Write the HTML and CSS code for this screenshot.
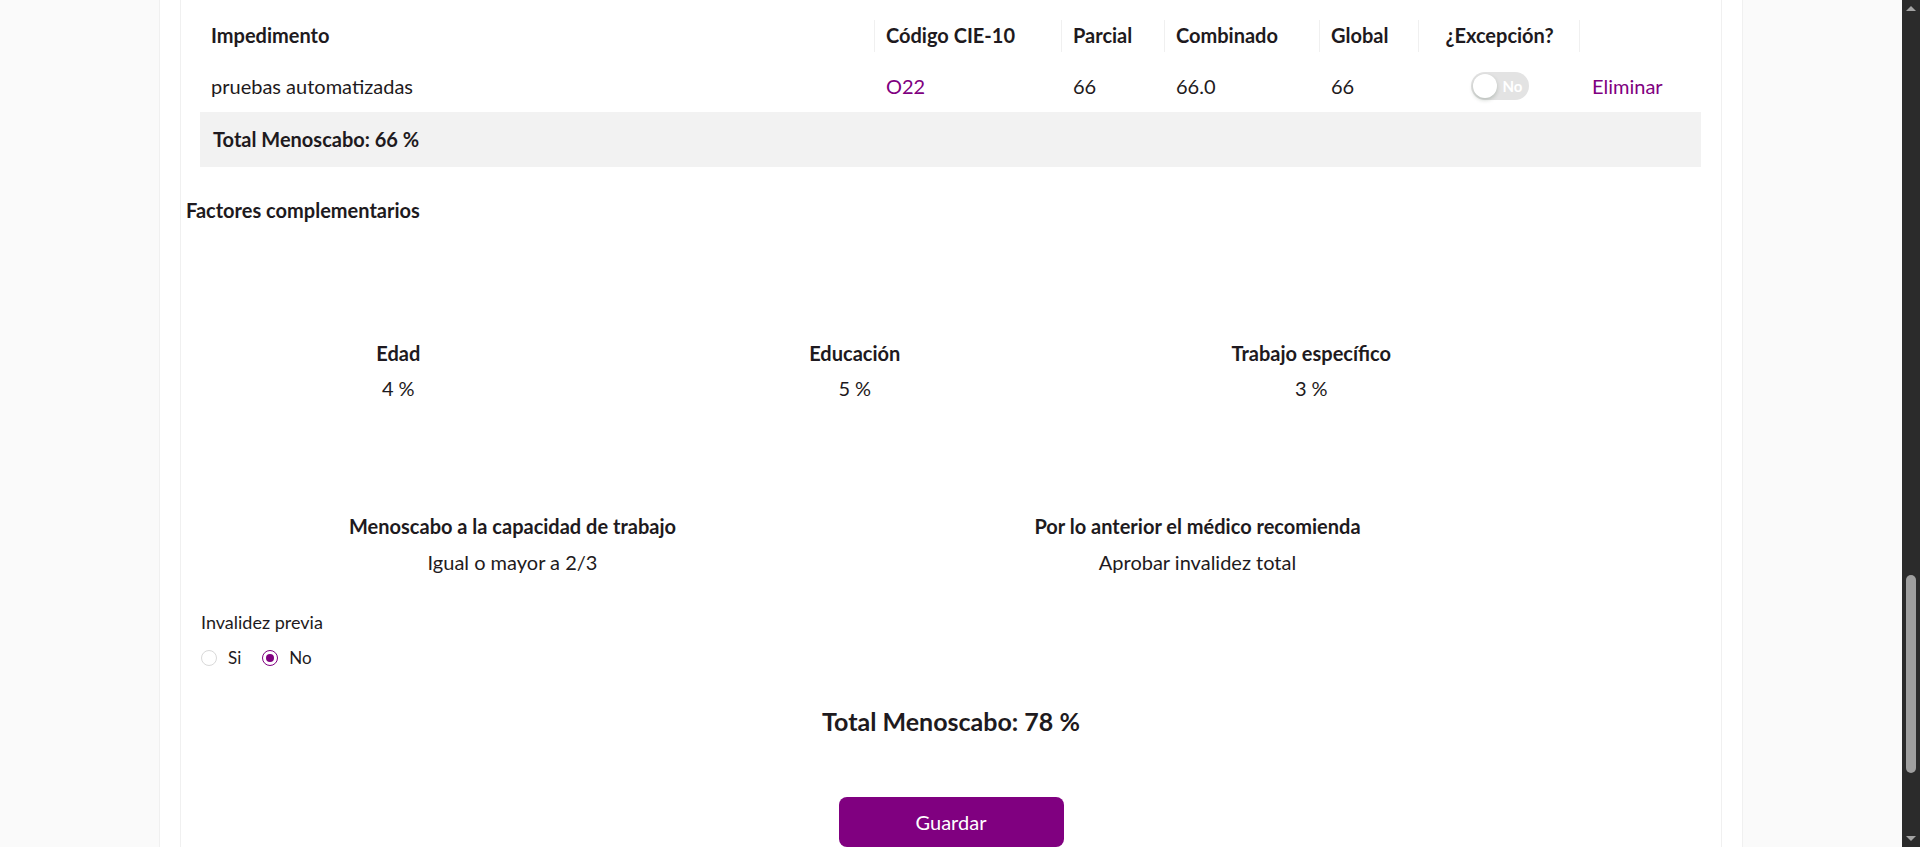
FILE: index.html
```html
<!DOCTYPE html>
<html lang="es">
<head>
<meta charset="utf-8">
<title>Menoscabo</title>
<link rel="stylesheet" href="styles.css">
</head>
<body>
<div class="screen">
  <div class="viewport">
    <div class="page">
      <div class="card">
        <div class="table-wrap">
          <table class="imp-table">
            <colgroup>
              <col class="c-imp"><col class="c-cie"><col class="c-par"><col class="c-comb"><col class="c-glob"><col class="c-exc"><col class="c-act">
            </colgroup>
            <thead>
              <tr>
                <th>Impedimento</th>
                <th>Código CIE-10</th>
                <th>Parcial</th>
                <th>Combinado</th>
                <th>Global</th>
                <th class="center">¿Excepción?</th>
                <th></th>
              </tr>
            </thead>
            <tbody>
              <tr>
                <td>pruebas automatizadas</td>
                <td><a class="link">O22</a></td>
                <td>66</td>
                <td>66.0</td>
                <td>66</td>
                <td class="center"><span class="switch"><span class="knob"></span><span class="switch-text">No</span></span></td>
                <td><a class="link">Eliminar</a></td>
              </tr>
            </tbody>
          </table>
          <div class="subtotal">Total Menoscabo: 66 %</div>
        </div>

        <h3 class="section-title">Factores complementarios</h3>

        <div class="factors">
          <div class="stat">
            <div class="stat-label">Edad</div>
            <div class="stat-value">4 %</div>
          </div>
          <div class="stat">
            <div class="stat-label">Educación</div>
            <div class="stat-value">5 %</div>
          </div>
          <div class="stat">
            <div class="stat-label">Trabajo específico</div>
            <div class="stat-value">3 %</div>
          </div>
        </div>

        <div class="summary">
          <div class="stat">
            <div class="stat-label">Menoscabo a la capacidad de trabajo</div>
            <div class="stat-value">Igual o mayor a 2/3</div>
          </div>
          <div class="stat">
            <div class="stat-label">Por lo anterior el médico recomienda</div>
            <div class="stat-value">Aprobar invalidez total</div>
          </div>
        </div>

        <div class="field">
          <div class="field-label">Invalidez previa</div>
          <div class="radio-group">
            <label class="radio"><span class="radio-dot"></span><span class="radio-text">Si</span></label>
            <label class="radio checked"><span class="radio-dot"></span><span class="radio-text">No</span></label>
          </div>
        </div>

        <div class="grand-total">Total Menoscabo: 78 %</div>

        <div class="actions">
          <button class="btn-primary" type="button">Guardar</button>
        </div>
      </div>
    </div>
  </div>
  <div class="scrollbar">
    <span class="sb-arrow sb-up"></span>
    <span class="sb-thumb"></span>
    <span class="sb-arrow sb-down"></span>
  </div>
</div>
</body>
</html>
```

FILE: styles.css
```css
html, body {
  margin: 0;
  padding: 0;
  height: 100%;
}

body {
  font-family: Lato, "Noto Sans", "Liberation Sans", sans-serif;
  color: #1e1a20;
  background: #fafafa;
}

.screen {
  display: flex;
  height: 847px;
  overflow: hidden;
}

.viewport {
  flex: 1;
  min-width: 0;
  overflow: hidden;
  background: #fafafa;
}

.page {
  box-sizing: border-box;
  width: 1584px;
  margin: 0 auto;
  min-height: 100%;
  padding: 0 20px;
  background: #ffffff;
  border-left: 1px solid #f0f0f0;
  border-right: 1px solid #f0f0f0;
}

.card {
  border-left: 1px solid #f0f0f0;
  border-right: 1px solid #f0f0f0;
  padding-top: 10px;
  padding-bottom: 60px;
  background: #ffffff;
}

/* ---------- table ---------- */
.table-wrap {
  margin: 0 20px 0 19px;
}

.imp-table {
  width: 100%;
  border-collapse: collapse;
  table-layout: fixed;
  font-size: 20px;
  line-height: 24px;
}

.c-imp { width: 675px; }
.c-cie { width: 187px; }
.c-par { width: 103px; }
.c-comb { width: 155px; }
.c-glob { width: 99px; }
.c-exc { width: 161px; }
.c-act { width: 121px; }

.imp-table th {
  position: relative;
  text-align: left;
  font-weight: 700;
  padding: 13px 11px 15px;
}

.imp-table th:not(:last-child)::before {
  content: "";
  position: absolute;
  right: 0;
  top: 50%;
  width: 1px;
  height: 32px;
  transform: translateY(-50%);
  background: rgba(0, 0, 0, 0.06);
}

.imp-table td {
  padding: 10px 11px 12px;
  font-weight: 400;
  vertical-align: middle;
}

.imp-table .center {
  text-align: center;
}

.link {
  color: #800080;
  text-decoration: none;
  cursor: pointer;
}

.imp-table td:last-child {
  padding-left: 12px;
}

.switch {
  display: inline-flex;
  align-items: center;
  box-sizing: border-box;
  width: 58px;
  height: 28px;
  padding: 2px;
  border-radius: 14px;
  background: #e3e3e3;
  vertical-align: top;
}

.knob {
  width: 24px;
  height: 24px;
  border-radius: 50%;
  background: #ffffff;
  box-shadow: 0 2px 4px rgba(0, 35, 11, 0.2);
}

.switch-text {
  margin-left: 6px;
  color: #ffffff;
  font-size: 15px;
  font-weight: 700;
  line-height: 20px;
}

.subtotal {
  background: #f2f2f2;
  padding: 15px 13px 16px;
  font-size: 20px;
  line-height: 24px;
  font-weight: 700;
}

/* ---------- factors ---------- */
.section-title {
  margin: 31px 0 0;
  padding-left: 5px;
  font-size: 20px;
  line-height: 24px;
  font-weight: 700;
}

.factors {
  display: grid;
  grid-template-columns: repeat(3, 456.5px);
  margin: 119px 0 0 -11px;
}

.summary {
  display: grid;
  grid-template-columns: repeat(2, 685px);
  margin: 114px 0 0 -11px;
}

.stat {
  text-align: center;
  font-size: 20px;
  line-height: 24px;
}

.stat-label {
  font-weight: 700;
}

.stat-value {
  margin-top: 11px;
}

.summary .stat-value {
  margin-top: 12px;
}

/* ---------- radio field ---------- */
.field {
  margin-top: 38px;
  padding-left: 20px;
  font-size: 17px;
}

.field-label {
  font-size: 18px;
  line-height: 20px;
}

.radio-group {
  display: flex;
  align-items: center;
  gap: 21px;
  margin-top: 14px;
  height: 24px;
}

.radio {
  display: inline-flex;
  align-items: center;
  cursor: pointer;
}

.radio-dot {
  box-sizing: border-box;
  width: 16px;
  height: 16px;
  border: 1px solid #d9d9d9;
  border-radius: 50%;
  background: #ffffff;
  display: inline-flex;
  align-items: center;
  justify-content: center;
}

.radio.checked .radio-dot {
  border-color: #800080;
}

.radio.checked .radio-dot::after {
  content: "";
  width: 8px;
  height: 8px;
  border-radius: 50%;
  background: #800080;
}

.radio-text {
  margin-left: 11px;
  line-height: 24px;
}

/* ---------- totals & actions ---------- */
.grand-total {
  margin-top: 36px;
  text-align: center;
  font-size: 25px;
  line-height: 30px;
  font-weight: 700;
}

.actions {
  margin-top: 61px;
  display: flex;
  justify-content: center;
}

.btn-primary {
  width: 225px;
  height: 50px;
  border: none;
  border-radius: 8px;
  background: #800080;
  color: #ffffff;
  font-family: Lato, "Noto Sans", "Liberation Sans", sans-serif;
  font-size: 20px;
  cursor: pointer;
}

/* ---------- fake scrollbar ---------- */
.scrollbar {
  width: 18px;
  flex: none;
  background: #2b2b2b;
  display: flex;
  flex-direction: column;
  align-items: center;
}

.sb-arrow {
  width: 0;
  height: 0;
  border-left: 5px solid transparent;
  border-right: 5px solid transparent;
}

.sb-up {
  margin-top: 6px;
  border-bottom: 5px solid #a3a3a3;
}

.sb-thumb {
  margin-top: 564px;
  width: 10px;
  height: 198px;
  border-radius: 5px;
  background: #9f9f9f;
}

.sb-down {
  margin-top: auto;
  margin-bottom: 6px;
  border-top: 5px solid #a3a3a3;
}
```
